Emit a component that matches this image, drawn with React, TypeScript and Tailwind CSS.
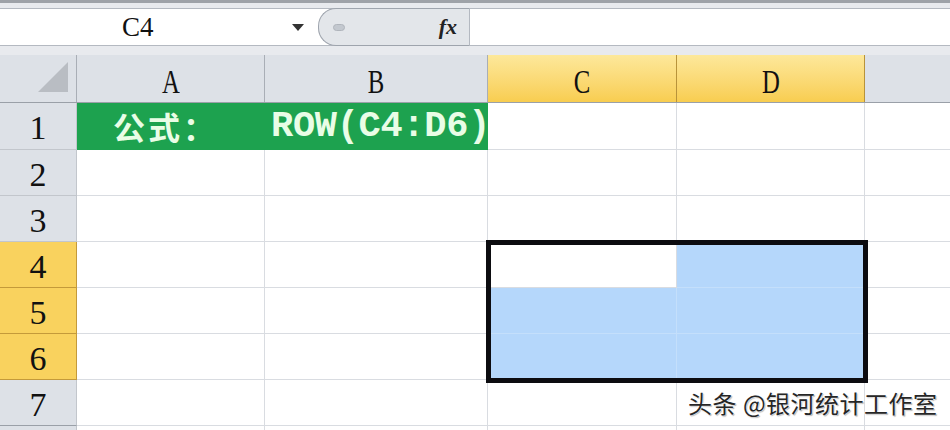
import React from "react";

const cols = ["A", "B", "C", "D"];
const colW = ["w-[188px]", "w-[223px]", "w-[189px]", "w-[188px]"];
const rowH = ["h-[47px]", "h-[46px]", "h-[46px]", "h-[46px]", "h-[46px]", "h-[46px]", "h-[46px]", "h-[46px]"];

const serif = { fontFamily: '"Liberation Serif", "DejaVu Serif", serif' };

function Cell({ r, c }: { r: number; c: number }) {
  const blue = (r === 4 && c === 3) || ((r === 5 || r === 6) && (c === 2 || c === 3));
  const green = r === 1 && (c === 0 || c === 1);
  let bg = "bg-white";
  if (blue) bg = "bg-[#b5d7fb]";
  if (green) bg = "bg-[#1da24f]";
  const border = green ? "border-r border-b border-[#1da24f]" : blue ? "border-r border-b border-[#c4dffb]" : "border-r border-b border-[#d9dce1]";
  return (
    <div className={`${colW[c]} h-full shrink-0 ${bg} ${border} flex items-center`}>
      {green && c === 0 && (
        <span
          className="ml-[36px] text-[32px] font-bold text-[#e9fde6] leading-none tracking-[3px]"
          style={{ fontFamily: '"Noto Sans CJK SC", sans-serif' }}
        >
          公式：
        </span>
      )}
      {green && c === 1 && (
        <span
          className="ml-[6px] text-[37px] font-bold text-[#e9fde6] leading-none tracking-[-0.3px]"
          style={{ fontFamily: '"Liberation Mono", monospace' }}
        >
          ROW(C4:D6)
        </span>
      )}
    </div>
  );
}

export default function App() {
  return (
    <div className="relative w-[950px] h-[430px] overflow-hidden bg-white">
      {/* formula area */}
      <div className="h-[55px] bg-[#e8eaee] border-t-[3px] border-[#9ea2a8] pt-[5px]">
        <div className="h-[38px] flex bg-white border-y border-[#b4b9c1]">
          <div className="w-[318px] flex items-center relative">
            <span className="ml-[122px] text-[27px] text-[#111] leading-none" style={serif}>
              C4
            </span>
            <svg className="absolute left-[292px] top-[15px]" width="12" height="7" viewBox="0 0 12 7">
              <path d="M0 0 L12 0 L6 7 Z" fill="#333" />
            </svg>
          </div>
          <div className="w-[152px] -my-px bg-[#e3e6ea] border border-r-[#b4b9c1] border-[#9ea4ad] rounded-l-[18px] flex items-center justify-between pl-[14px] pr-[12px]">
            <div className="w-[12px] h-[7px] rounded-full bg-[#c3c8cf] border border-[#b0b5bc]" />
            <span className="text-[22px] font-bold italic text-[#222] leading-none" style={serif}>
              fx
            </span>
          </div>
          <div className="flex-1" />
        </div>
      </div>

      {/* column headers */}
      <div className="flex h-[48px] border-b border-[#9aa0a8]">
        <div className="w-[77px] shrink-0 bg-[#dde1e7] border-r border-[#a9aeb6] relative">
          <svg className="absolute right-[8px] bottom-[10px]" width="30" height="30" viewBox="0 0 30 30">
            <path d="M30 0 L30 30 L0 30 Z" fill="#b9bdc3" />
          </svg>
        </div>
        {cols.map((c, i) => {
          const sel = i >= 2;
          return (
            <div
              key={c}
              className={`${colW[i]} shrink-0 flex items-center justify-center border-r ${
                sel ? "bg-gradient-to-b from-[#fde89a] to-[#f8cd4f] border-[#b8933a]" : "bg-[#dde1e7] border-[#a9aeb6]"
              }`}
            >
              <span className="text-[33px] leading-none mt-[8px] text-[#111] scale-x-[0.75]" style={serif}>
                {c}
              </span>
            </div>
          );
        })}
        <div className="flex-1 bg-[#dde1e7]" />
      </div>

      {/* rows */}
      {[1, 2, 3, 4, 5, 6, 7, 8].map((r, ri) => {
        const sel = r >= 4 && r <= 6;
        return (
          <div key={r} className={`flex ${rowH[ri]}`}>
            <div
              className={`w-[77px] shrink-0 flex items-center justify-center border-r border-b ${
                sel ? "bg-[#f9d25e] border-[#c49a3a]" : "bg-[#dde1e7] border-[#c2c6cc]"
              } ${r === 7 ? "border-b-[#9aa0a8]" : ""}`}
            >
              {r <= 7 && (
                <span className="text-[34px] leading-none mt-[4px] text-[#111]" style={serif}>
                  {r}
                </span>
              )}
            </div>
            {cols.map((_, ci) => (
              <Cell key={ci} r={r} c={ci} />
            ))}
            <div className="flex-1 bg-white border-b border-[#d9dce1]" />
          </div>
        );
      })}

      {/* selection border */}
      <div className="absolute left-[486px] top-[240px] w-[382px] h-[143px] border-[5px] border-[#0c0c10]" />

      {/* watermark */}
      <div
        className="absolute left-[688px] top-[391px] text-[24px] leading-none text-[#262626] tracking-[0.5px]"
        style={{
          fontFamily: '"Noto Sans CJK SC", sans-serif',
          textShadow: "0 0 2px #fff, 0 0 2px #fff, 0 0 3px #fff, 1px 1px 1px #888",
        }}
      >
        头条 @银河统计工作室
      </div>
    </div>
  );
}
